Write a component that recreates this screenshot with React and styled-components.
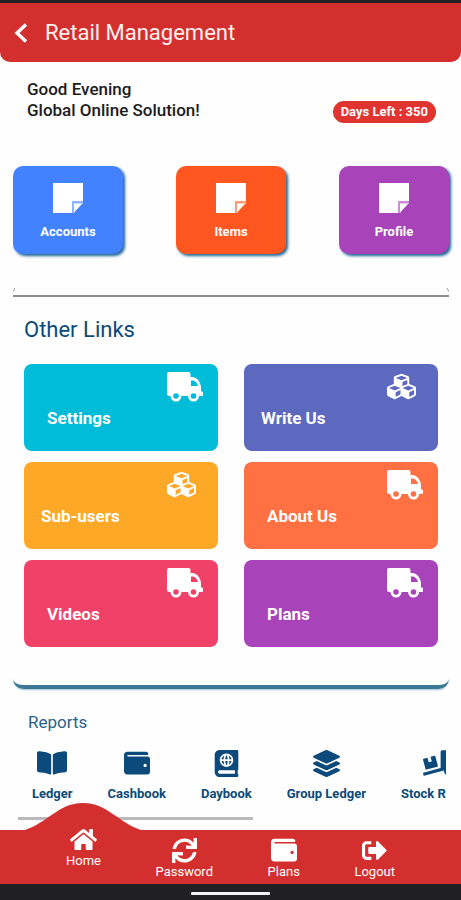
import React from "react";
import styled, { createGlobalStyle } from "styled-components";
import {
  FaCubes,
  FaBookOpen,
  FaWallet,
  FaAtlas,
  FaLayerGroup,
  FaTruckLoading,
  FaHome,
  FaSync,
  FaSignOutAlt,
} from "react-icons/fa";

const RED = "#d32f2f";
const NAVY = "#0b4a7a";

const GlobalStyle = createGlobalStyle`
  *, *::before, *::after { box-sizing: border-box; }
  body { margin: 0; background: #fff; font-family: Roboto, "Liberation Sans", sans-serif; }
  button { font: inherit; border: 0; padding: 0; background: none; cursor: pointer; }
  a { color: inherit; text-decoration: none; }
  h1, h2, p { margin: 0; }
  svg { display: block; flex: none; }
`;

const Page = styled.div`
  min-height: 100vh;
  display: flex;
  flex-direction: column;
  background: #fefefe;
`;

const StatusStrip = styled.div`
  background: ${RED};
  border-top: 3px solid #232124;
  border-radius: 0 0 10px 10px;
`;

const Header = styled.header`
  height: 59px;
  padding: 0 14px;
  display: flex;
  align-items: center;
  gap: 17px;
  color: #fff1ee;
`;

const Title = styled.h1`
  font-size: 22px;
  line-height: 28px;
  font-weight: 400;
`;

const Main = styled.main`
  flex: 1;
  display: flex;
  flex-direction: column;
  padding: 0 12px 0 13px;
`;

const Greeting = styled.section`
  display: flex;
  justify-content: space-between;
  align-items: flex-end;
  padding: 17px 13px 0 14px;
`;

const GreetingText = styled.p`
  font-size: 17px;
  line-height: 21px;
  font-weight: 500;
  color: #1c1c1e;
`;

const DaysBadge = styled.span`
  height: 22px;
  padding: 0 8px;
  border-radius: 11px;
  background: #e03430;
  color: #fff;
  font-size: 13px;
  line-height: 22px;
  font-weight: 700;
  margin-bottom: -2px;
`;

const QuickCards = styled.nav`
  display: flex;
  justify-content: space-between;
  padding-top: 45px;
`;

const QuickCard = styled.button`
  width: 110px;
  height: 88px;
  display: flex;
  flex-direction: column;
  align-items: center;
  padding-top: 17px;
  gap: 11px;
  border-radius: 10px;
  background: ${(p) => p.$color};
  box-shadow: 2px 2px 3px #1c6595;
  color: #fff;
  && {
    font-size: 13px;
    line-height: 16px;
    font-weight: 700;
  }
`;

const Divider = styled.div`
  height: 11px;
  margin-top: 32px;
  overflow: hidden;
  border-bottom: 2px solid #8d8d8d;
  &::before {
    content: "";
    display: block;
    height: 6px;
    border: 1px solid transparent;
    border-left-color: #999;
    border-right-color: #999;
    border-radius: 6px 6px 0 0;
  }
`;

const Links = styled.section`
  padding: 19px 11px 38px;
  border-radius: 0 0 10px 10px;
  border-bottom: 4px solid #3c7896;
  box-shadow: 0 3px 2px -2px #9cc0d4;
`;

const LinksTitle = styled.h2`
  font-size: 22px;
  line-height: 28px;
  font-weight: 400;
  color: ${NAVY};
`;

const LinkGrid = styled.div`
  display: grid;
  grid-template-columns: 1fr 1fr;
  gap: 11px 26px;
  padding-top: 20px;
`;

const LinkTile = styled.button`
  height: 87px;
  display: flex;
  flex-direction: column;
  justify-content: space-between;
  padding: 8px 0 22px;
  border-radius: 8px;
  background: ${(p) => p.$color};
  color: #fff;
`;

const TileIcon = styled.span`
  height: 30px;
  width: 51px;
  align-self: flex-end;
`;

const TileLabel = styled.span`
  align-self: flex-start;
  padding-left: ${(p) => (p.$wide ? 23 : 17)}px;
  font-size: 17px;
  line-height: 22px;
  font-weight: 700;
`;

const Reports = styled.section`
  padding: 22px 3px 9px 5px;
  color: ${NAVY};
`;

const ReportsTitle = styled.h2`
  padding-left: 10px;
  font-size: 17px;
  line-height: 22px;
  font-weight: 400;
  color: #2c628a;
`;

const ReportRow = styled.div`
  display: flex;
  gap: 35px;
  padding: 16px 0 15px 14px;
  overflow: hidden;
`;

const ReportItem = styled.button`
  flex: none;
  display: flex;
  flex-direction: column;
  align-items: center;
  gap: 9px;
  color: ${NAVY};
  && {
    font-size: 13px;
    line-height: 16px;
    font-weight: 700;
  }
`;

const ReportIcon = styled.span`
  height: 28px;
  display: flex;
  align-items: center;
`;

const ScrollThumb = styled.div`
  width: 55%;
  height: 3px;
  background: #b9b9b9;
`;

const BottomNav = styled.nav`
  height: 54px;
  display: flex;
  justify-content: space-between;
  align-items: flex-end;
  padding: 0 66px 4px;
  background: ${RED};
  color: #fff;
`;

const NavItem = styled.a`
  position: relative;
  display: flex;
  flex-direction: column;
  align-items: center;
  gap: 1px;
  padding-bottom: ${(p) => (p.$active ? 11 : 0)}px;
  font-size: 13px;
  line-height: 16px;
  font-weight: 400;
`;

const NavIcon = styled.span`
  position: relative;
  height: 26px;
  display: flex;
  align-items: center;
`;

const NavText = styled.span`
  position: relative;
`;

const Hump = styled.svg`
  position: absolute;
  left: 50%;
  top: -23px;
  transform: translateX(-50%);
`;

const SystemBar = styled.div`
  height: 16px;
  display: flex;
  justify-content: center;
  align-items: center;
  background: #202023;
`;

const HomeHandle = styled.div`
  width: 17%;
  height: 3px;
  margin-top: 2px;
  border-radius: 1px;
  background: #f2f2f2;
`;

const NoteIcon = () => (
  <svg width="30" height="30" viewBox="0 0 30 30" aria-hidden="true">
    <path fill="#fff" d="M0 0H30V18H19V30H0Z" />
    <path fill="#fff" fillOpacity=".4" d="M19 18H30V21H22V30H19Z" />
    <path fill="#fff" d="M21 20.5H29.5L21 29.5Z" />
  </svg>
);

const TruckIcon = () => (
  <svg width="36" height="30" viewBox="0 0 36 30" aria-hidden="true">
    <path
      fill="#fff"
      fillRule="evenodd"
      d="M2 0H21.5Q23.5 0 23.5 2V5H26C30.5 6 33.5 10 34 15V19.5H35Q36 19.5 36 20.5V23Q36 24 35 24H32A5.5 5.5 0 0 1 21 24H14.5A5.5 5.5 0 0 1 3.5 24H2Q0 24 0 22V2Q0 0 2 0ZM24 8.5V14H31C30.5 11 28 8.5 25.5 8.5ZM9 21.2A2.8 2.8 0 1 0 9 26.8A2.8 2.8 0 1 0 9 21.2ZM26.5 21.2A2.8 2.8 0 1 0 26.5 26.8A2.8 2.8 0 1 0 26.5 21.2Z"
    />
  </svg>
);

const BackIcon = () => (
  <svg width="14" height="20" viewBox="0 0 14 20" aria-hidden="true">
    <path d="M12 1.5L3 10L12 18.5" fill="none" stroke="#fff" strokeWidth="3.4" />
  </svg>
);

const quickCards = [
  { label: "Accounts", color: "#4282ff" },
  { label: "Items", color: "#ff571f" },
  { label: "Profile", color: "#a943ba" },
];

const links = [
  { label: "Settings", color: "#00bcd9", truck: true },
  { label: "Write Us", color: "#5d69be" },
  { label: "Sub-users", color: "#fea827" },
  { label: "About Us", color: "#ff7043", truck: true },
  { label: "Videos", color: "#f04268", truck: true },
  { label: "Plans", color: "#a943ba", truck: true },
];

const reports = [
  { label: "Ledger", Icon: FaBookOpen, size: 30 },
  { label: "Cashbook", Icon: FaWallet, size: 26 },
  { label: "Daybook", Icon: FaAtlas, size: 27 },
  { label: "Group Ledger", Icon: FaLayerGroup, size: 27 },
  { label: "Stock Report", Icon: FaTruckLoading, size: 32 },
];

const navItems = [
  { label: "Home", Icon: FaHome, size: 27, active: true },
  { label: "Password", Icon: FaSync, size: 25 },
  { label: "Plans", Icon: FaWallet, size: 26 },
  { label: "Logout", Icon: FaSignOutAlt, size: 25 },
];

export default function App() {
  return (
    <Page>
      <GlobalStyle />
      <StatusStrip>
        <Header>
          <button type="button" aria-label="Back">
            <BackIcon />
          </button>
          <Title>Retail Management</Title>
        </Header>
      </StatusStrip>
      <Main>
        <Greeting>
          <GreetingText>
            Good Evening
            <br />
            Global Online Solution!
          </GreetingText>
          <DaysBadge>Days Left : 350</DaysBadge>
        </Greeting>
        <QuickCards>
          {quickCards.map((c) => (
            <QuickCard key={c.label} type="button" $color={c.color}>
              <NoteIcon />
              {c.label}
            </QuickCard>
          ))}
        </QuickCards>
        <Divider />
        <Links>
          <LinksTitle>Other Links</LinksTitle>
          <LinkGrid>
            {links.map((l) => (
              <LinkTile key={l.label} type="button" $color={l.color}>
                <TileIcon>{l.truck ? <TruckIcon /> : <FaCubes size={29} />}</TileIcon>
                <TileLabel $wide={l.truck}>{l.label}</TileLabel>
              </LinkTile>
            ))}
          </LinkGrid>
        </Links>
        <Reports>
          <ReportsTitle>Reports</ReportsTitle>
          <ReportRow>
            {reports.map(({ label, Icon, size }) => (
              <ReportItem key={label} type="button">
                <ReportIcon>
                  <Icon size={size} />
                </ReportIcon>
                {label}
              </ReportItem>
            ))}
          </ReportRow>
          <ScrollThumb />
        </Reports>
      </Main>
      <BottomNav>
        {navItems.map(({ label, Icon, size, active }) => (
          <NavItem key={label} href="#" $active={active}>
            {active && (
              <Hump width="124" height="28" viewBox="0 0 124 28" aria-hidden="true">
                <path fill={RED} d="M0 28C26 22 36 0 62 0S98 22 124 28Z" />
              </Hump>
            )}
            <NavIcon>
              <Icon size={size} />
            </NavIcon>
            <NavText>{label}</NavText>
          </NavItem>
        ))}
      </BottomNav>
      <SystemBar>
        <HomeHandle />
      </SystemBar>
    </Page>
  );
}
